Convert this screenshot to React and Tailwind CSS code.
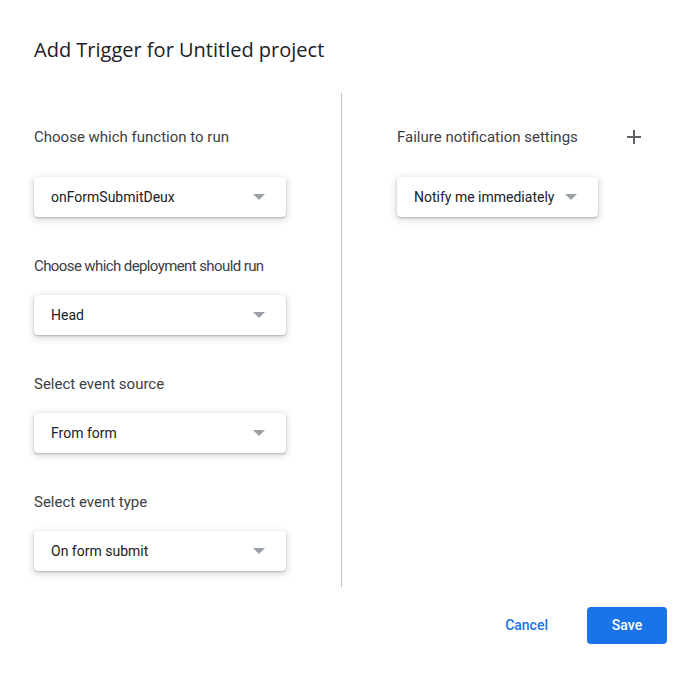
import React from 'react';

const Caret = () => (
  <svg width="12" height="6" viewBox="0 0 12 6" className="shrink-0">
    <path d="M0 0 L12 0 L6 6 Z" fill="#9aa0a6" />
  </svg>
);

const Dropdown = ({ value, width = 'w-[252px]' }) => (
  <div
    className={`${width} h-[40px] flex items-center justify-between pl-[17px] pr-[21px] bg-white rounded-[4px] shadow-[0_1px_2px_0_rgba(60,64,67,0.3),0_2px_6px_2px_rgba(60,64,67,0.15)] text-[14px] text-[#202124]`}
  >
    <span>{value}</span>
    <Caret />
  </div>
);

const Field = ({ label, value, first, tight }) => (
  <div className="flex flex-col">
    <div
      className={`h-[20px] leading-[20px] text-[15px] text-[#3c4043] whitespace-nowrap ${tight ? 'tracking-[-0.6px]' : ''}`}
    >
      {label}
    </div>
    <div className={first ? 'mt-[30px]' : 'mt-[19px]'}>
      <Dropdown value={value} />
    </div>
  </div>
);

export default function App() {
  return (
    <div className="w-[699px] h-[681px] bg-white font-['Roboto',sans-serif] flex flex-col">
      <div className="pt-[36px] pl-[34px] text-[20px] leading-[28px] text-[#202124] font-['Open_Sans','Roboto',sans-serif]">
        Add Trigger for Untitled project
      </div>

      <div className="flex mt-[29px]">
        <div className="w-[341px] shrink-0 pl-[34px] pt-[34px] pb-[16px] flex flex-col gap-[39px]">
          <Field label="Choose which function to run" value="onFormSubmitDeux" first />
          <Field label="Choose which deployment should run" value="Head" tight />
          <Field label="Select event source" value="From form" />
          <Field label="Select event type" value="On form submit" />
        </div>
        <div className="w-px shrink-0 bg-[#c4c4c4]" />
        <div className="flex-1 pl-[55px] pr-[58px] pt-[34px]">
          <div className="flex items-center justify-between h-[20px]">
            <span className="text-[15px] leading-[20px] text-[#3c4043]">Failure notification settings</span>
            <svg width="14" height="14" viewBox="0 0 14 14">
              <path d="M7 0 V14 M0 7 H14" stroke="#5f6368" strokeWidth="2" />
            </svg>
          </div>
          <div className="mt-[30px]">
            <Dropdown value="Notify me immediately" width="w-[201px]" />
          </div>
        </div>
      </div>

      <div className="flex justify-end items-center mt-[20px] pr-[32px]">
        <button className="text-[14px] font-medium text-[#1a73e8] mr-[39px]">Cancel</button>
        <button className="w-[80px] h-[37px] rounded-[4px] bg-[#1a73e8] text-white text-[14px] font-medium">
          Save
        </button>
      </div>
    </div>
  );
}
